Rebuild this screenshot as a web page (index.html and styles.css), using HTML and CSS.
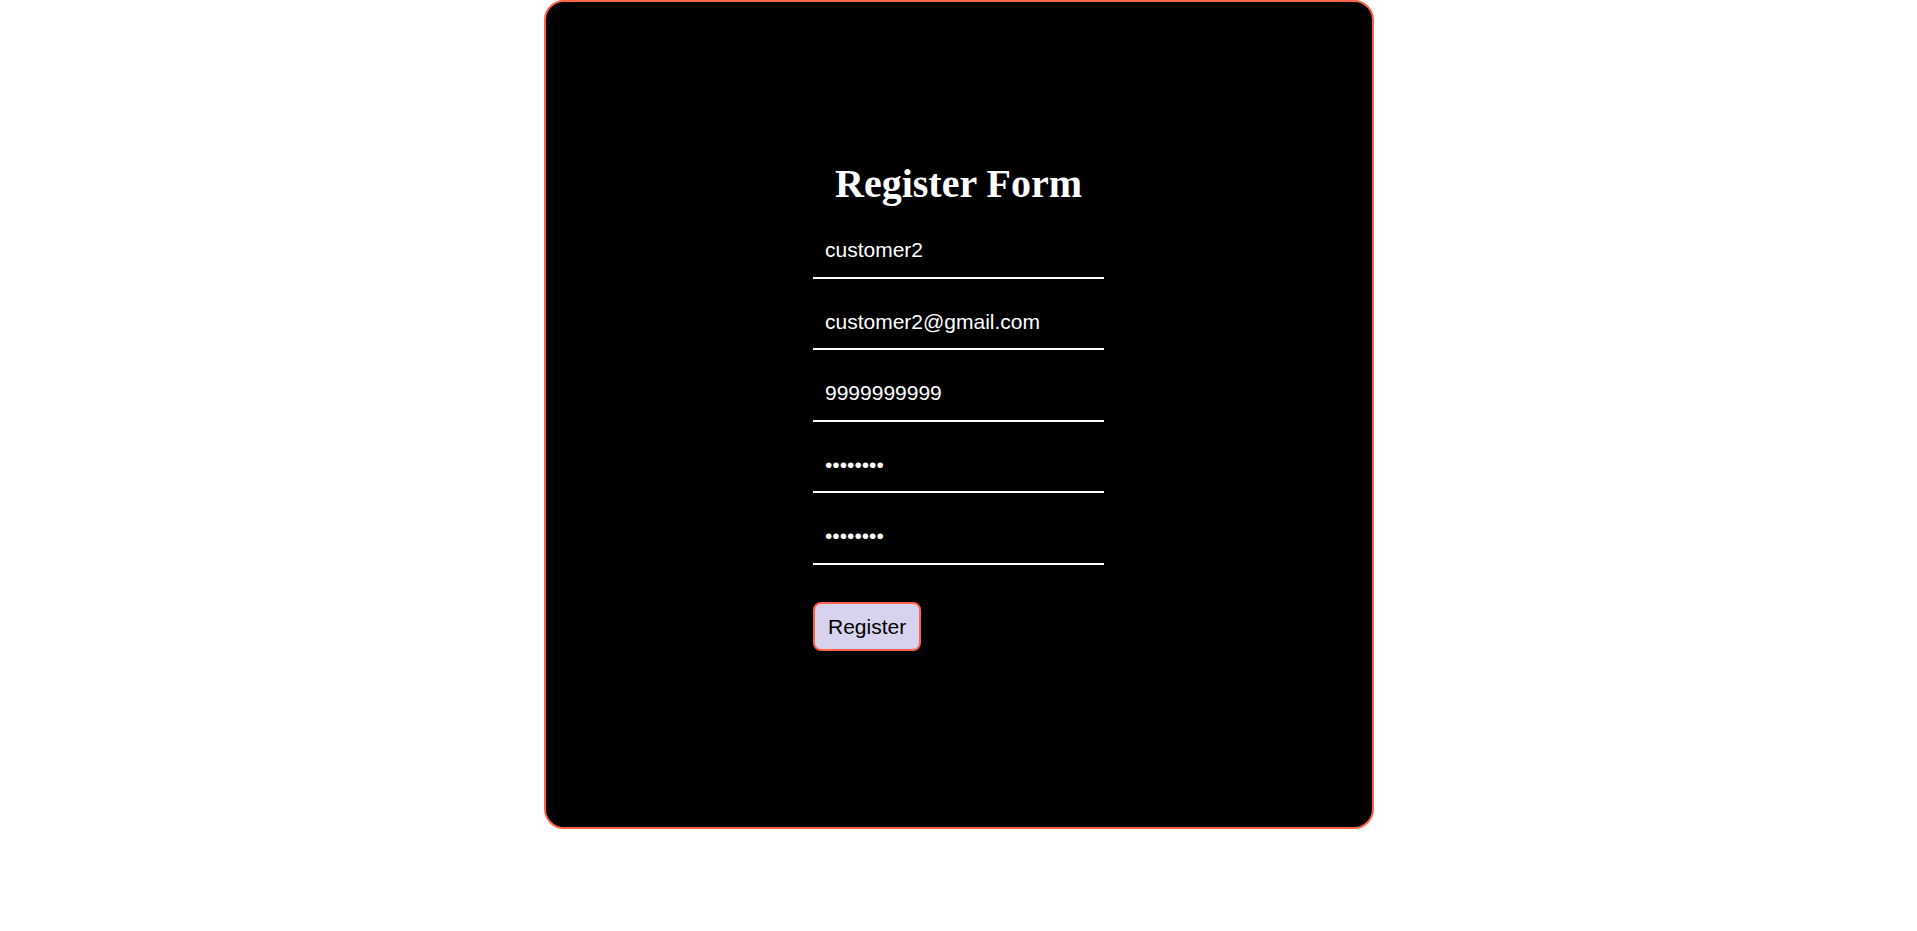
FILE: index.html
```html
<!DOCTYPE html>
<html lang="en">
<head>
<meta charset="utf-8">
<title>Register Form</title>
<link rel="stylesheet" href="styles.css">
</head>
<body>
<div class="card">
  <form class="register-form" onsubmit="return false">
    <h1 class="title">Register Form</h1>
    <input class="field" type="text" value="customer2">
    <input class="field" type="email" value="customer2@gmail.com">
    <input class="field" type="text" value="9999999999">
    <input class="field" type="password" value="password">
    <input class="field" type="password" value="password">
    <button class="submit" type="submit">Register</button>
  </form>
</div>
</body>
</html>
```

FILE: styles.css
```css
html, body {
  margin: 0;
  padding: 0;
  background: #ffffff;
}

.card {
  box-sizing: border-box;
  width: 830px;
  height: 829px;
  margin: 0 auto;
  padding-top: 159px;
  background: #000000;
  border: 2px solid #ff6347;
  border-radius: 20px;
}

.register-form {
  width: 291px;
  margin: 0 auto;
  display: flex;
  flex-direction: column;
  gap: 17px;
}

.title {
  margin: 0;
  font-family: "Liberation Serif", "Times New Roman", serif;
  font-weight: bold;
  font-size: 40px;
  line-height: 46px;
  color: #ffffff;
  text-align: center;
}

.field {
  box-sizing: border-box;
  width: 100%;
  margin: 0;
  padding: 14px 12px 14.5px;
  font-family: "Liberation Sans", Arial, sans-serif;
  font-size: 21px;
  line-height: 24px;
  color: #ffffff;
  background: transparent;
  border: none;
  border-bottom: 2px solid #ffffff;
  outline: none;
}

.submit {
  align-self: flex-start;
  margin-top: 20px;
  padding: 11px 13px 10px;
  font-family: "Liberation Sans", Arial, sans-serif;
  font-size: 21px;
  line-height: 24px;
  color: #000000;
  background: #d7d3ee;
  border: 2px solid #ff6347;
  border-radius: 8px;
  cursor: pointer;
}
```
